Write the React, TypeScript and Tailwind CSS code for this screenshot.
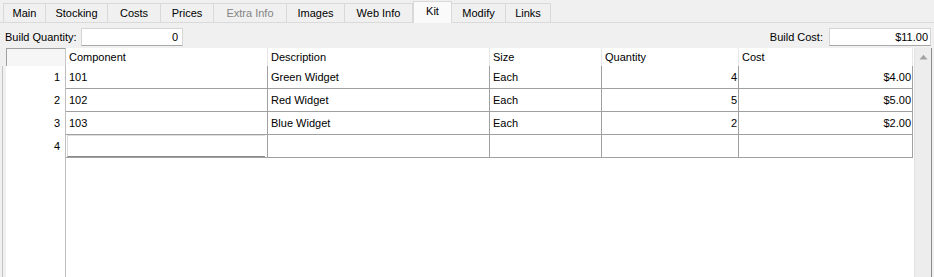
import React from "react";

const tabs = [
  { label: "Main", w: "w-[43px]" },
  { label: "Stocking", w: "w-[62px]" },
  { label: "Costs", w: "w-[53px]" },
  { label: "Prices", w: "w-[53px]" },
  { label: "Extra Info", w: "w-[73px]", disabled: true },
  { label: "Images", w: "w-[58px]" },
  { label: "Web Info", w: "w-[68px]" },
  { label: "Kit", w: "w-[39px]", active: true },
  { label: "Modify", w: "w-[54px]" },
  { label: "Links", w: "w-[45px]" },
];

const cols = [
  { name: "Component", w: "w-[202px]", right: false },
  { name: "Description", w: "w-[222px]", right: false },
  { name: "Size", w: "w-[112px]", right: false },
  { name: "Quantity", w: "w-[137px]", right: true },
  { name: "Cost", w: "w-[174px]", right: true },
];

const rows = [
  ["101", "Green Widget", "Each", "4", "$4.00"],
  ["102", "Red Widget", "Each", "5", "$5.00"],
  ["103", "Blue Widget", "Each", "2", "$2.00"],
  ["", "", "", "", ""],
];

export default function App() {
  return (
    <div
      className="w-[934px] h-[277px] overflow-hidden bg-[#f0f0f0] text-[11px] text-black flex flex-col"
      style={{ fontFamily: '"Liberation Sans", Arial, sans-serif' }}
    >
      {/* Tab strip */}
      <div className="h-[23px] flex items-end pl-[3px] border-b border-[#dadada] relative">
        {tabs.map((t) =>
          t.active ? (
            <div
              key={t.label}
              className={`${t.w} h-[22px] -mb-px bg-[#fafafa] border border-b-0 border-[#d9d9d9] flex items-center justify-center leading-none pb-[2px] relative z-10`}
            >
              {t.label}
            </div>
          ) : (
            <div
              key={t.label}
              className={`${t.w} h-[19px] bg-[#f0f0f0] border border-l-0 first:border-l border-b-0 border-[#d9d9d9] flex items-center justify-center leading-none ${
                t.disabled ? "text-[#838383] bg-[#ececec]" : ""
              }`}
            >
              {t.label}
            </div>
          )
        )}
      </div>

      {/* Build fields */}
      <div className="h-[25px] flex items-center justify-between pl-[5px] pr-[3px] pt-[3px]">
        <div className="flex items-center">
          <span className="w-[76px]">Build Quantity:</span>
          <div className="w-[102px] h-[18px] bg-white border border-[#d5d5d5] border-b-[#a8a8a8] flex items-center justify-end pr-[4px] leading-none">
            0
          </div>
        </div>
        <div className="flex items-center">
          <span className="mr-[6px]">Build Cost:</span>
          <div className="w-[102px] h-[18px] bg-white border border-[#d5d5d5] border-b-[#a8a8a8] flex items-center justify-end pr-[2px] leading-none">
            $11.00
          </div>
        </div>
      </div>

      {/* Grid */}
      <div className="flex flex-1 min-h-0">
        <div className="w-[6px] flex">
          <div className="w-[2px]" />
          <div className="w-px bg-[#c4c4c4] mt-[18px]" />
        </div>
        <div className="w-[908px] bg-white flex flex-col">
          {/* Header */}
          <div className="flex h-[18px]">
            <div className="w-[60px] bg-[#f6f6f6] border-t border-l border-[#a0a0a0] border-r border-r-[#c8c8c8]" />
            {cols.map((c) => (
              <div
                key={c.name}
                className={`${c.w} h-[18px] border-r border-[#e6e6e6] px-[3px]`}
              >
                <div className="h-[15px] overflow-hidden pt-[3px] leading-[13px]">
                  {c.name}
                </div>
              </div>
            ))}
          </div>
          {/* Body */}
          <div className="flex flex-1">
            <div className="w-[60px] border-r border-[#bdbdbd] flex flex-col">
              {rows.map((_, i) => (
                <div
                  key={i}
                  className="h-[23px] flex items-center justify-end pr-[5px]"
                >
                  {i + 1}
                </div>
              ))}
            </div>
            <div className="flex flex-col">
              {rows.map((r, i) => (
                <div key={i} className="flex h-[23px]">
                  {cols.map((c, j) => (
                    <div
                      key={j}
                      className={`${c.w} h-[23px] border-r border-b border-[#a0a0a0] flex items-center ${
                        c.right ? "justify-end pr-[1px]" : "pl-[3px]"
                      }`}
                    >
                      {i === 3 && j === 0 ? (
                        <div className="w-full h-full -ml-[2px] border border-[#dcdcdc] border-b-[#8a8a8a] border-r-0 bg-white" />
                      ) : (
                        r[j]
                      )}
                    </div>
                  ))}
                </div>
              ))}
            </div>
          </div>
        </div>
        {/* Scrollbar */}
        <div className="w-[17px] bg-[#ededed] border-l border-[#e2e2e2] flex flex-col items-center">
          <div className="h-[17px] w-full flex items-center justify-center">
            <svg width="9" height="6" viewBox="0 0 9 6">
              <path d="M0.5 5.5 L4.5 0.8 L8.5 5.5 Z" fill="#a3a3a3" />
            </svg>
          </div>
        </div>
        <div className="w-px bg-[#8c8c8c]" />
        <div className="w-[2px] bg-[#f0f0f0]" />
      </div>
    </div>
  );
}
